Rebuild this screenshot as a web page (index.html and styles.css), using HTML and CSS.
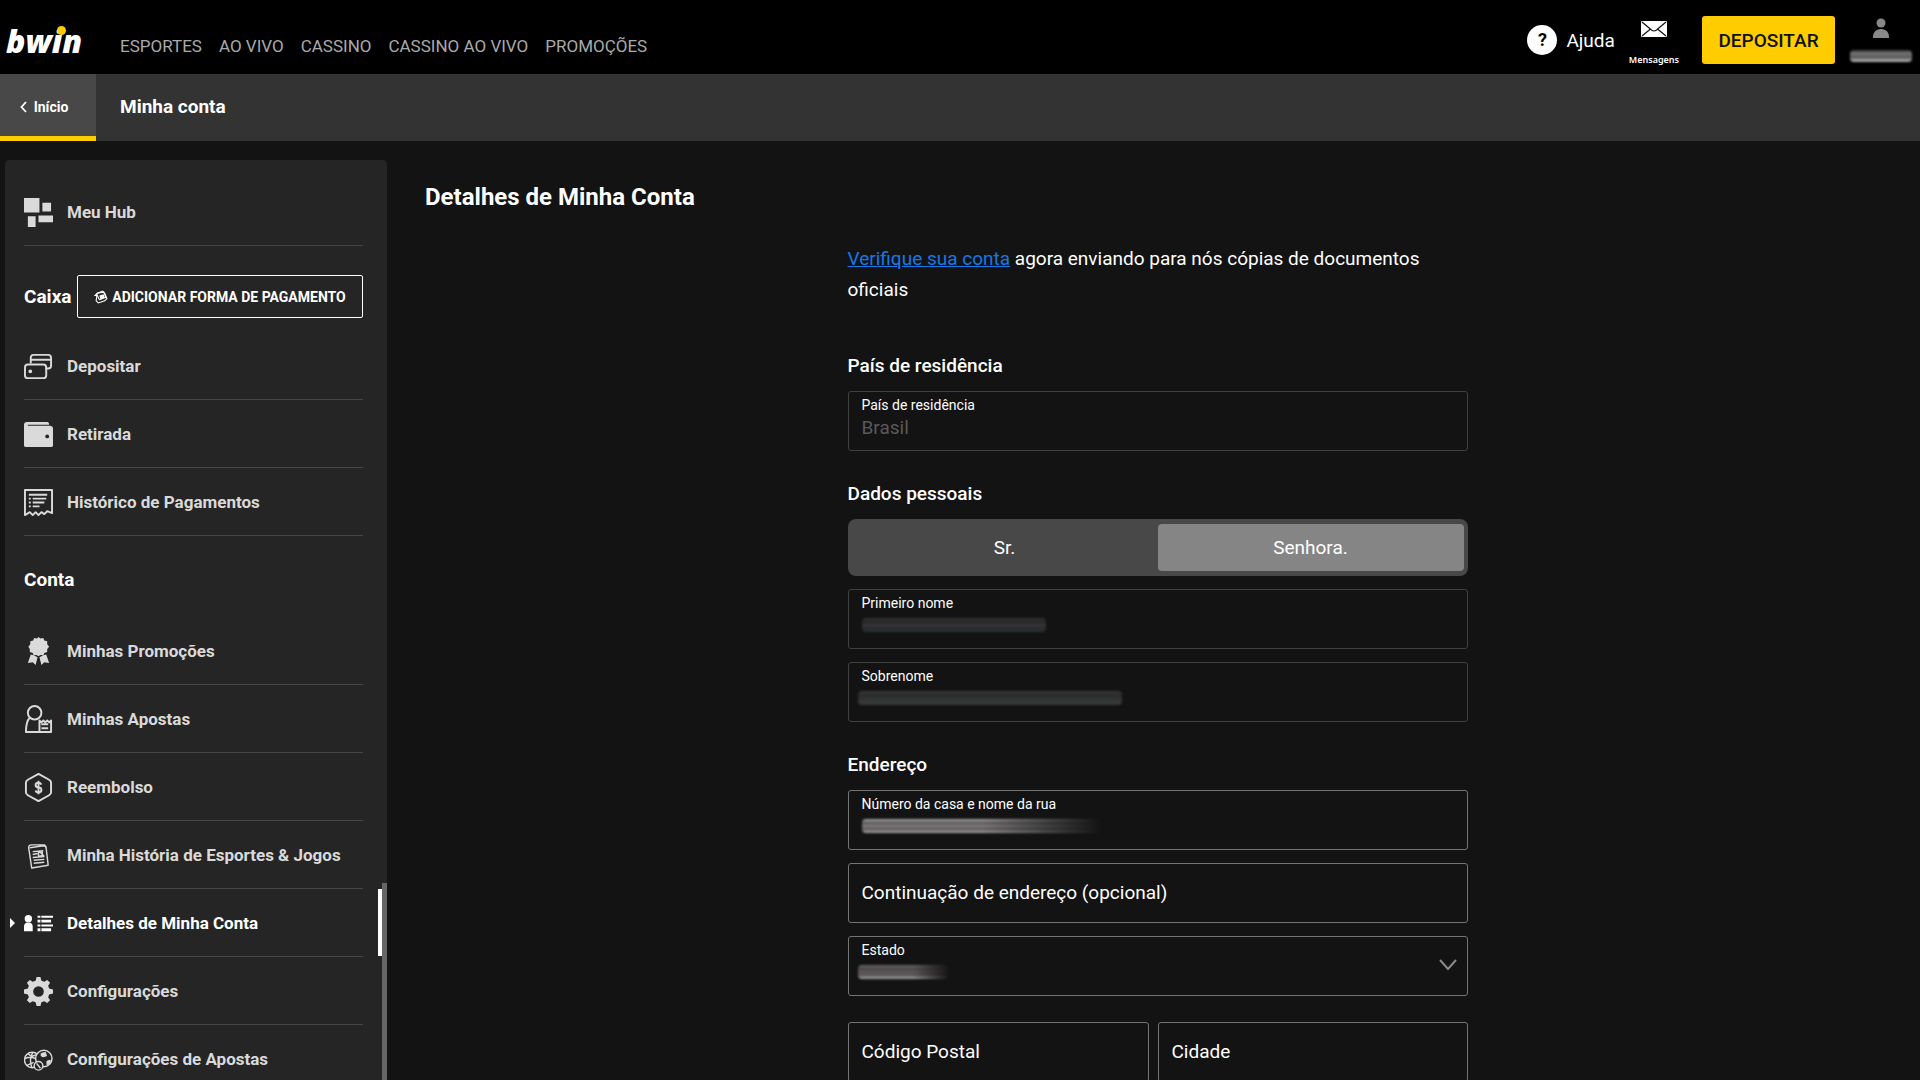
FILE: index.html
```html
<!DOCTYPE html>
<html lang="pt-BR">
<head>
<meta charset="utf-8">
<title>bwin - Minha conta</title>
<link rel="stylesheet" href="styles.css">
</head>
<body>
<header class="topbar">
  <a class="logo" href="#">bwin<span class="logo-dot"></span></a>
  <nav class="mainnav">
    <a href="#">ESPORTES</a>
    <a href="#">AO VIVO</a>
    <a href="#">CASSINO</a>
    <a href="#">CASSINO AO VIVO</a>
    <a href="#">PROMOÇÕES</a>
  </nav>
  <div class="tools">
    <a class="help" href="#"><span class="help-mark">?</span>Ajuda</a>
    <a class="messages" href="#">
      <svg width="26" height="16" viewBox="0 0 26 16"><rect width="26" height="16" rx="1" fill="#fff"/><path d="M1 1l9.500 8q2.500 2 5 0L25 1M1 15l8.500-7M25 15l-8.500-7" fill="none" stroke="#111" stroke-width="1.200"/></svg>
      <span>Mensagens</span>
    </a>
    <button class="deposit" type="button">DEPOSITAR</button>
    <a class="profile" href="#" aria-label="Perfil">
      <svg width="18" height="20" viewBox="0 0 18 20" fill="#888"><circle cx="9" cy="5" r="4.500"/><path d="M1 20v-1q0-7 7-8h2q7 1 7 8v1z"/></svg>
      <span class="masked masked-balance"></span>
    </a>
  </div>
</header>

<div class="subbar">
  <a class="back" href="#"><svg width="7" height="12" viewBox="0 0 7 12"><path d="M6 1L1.500 6 6 11" fill="none" stroke="#fff" stroke-width="1.800"/></svg>Início</a>
  <h1 class="section-title">Minha conta</h1>
</div>

<div class="layout">
  <aside class="sidebar">
    <ul class="menu">
      <li><a href="#"><svg class="icon" viewBox="0 0 30 30"><path d="M0 0h16v15H0zM19 5h9v9h-9zM15 18h15v7H15zM4 19h8v11H4z"/></svg>Meu Hub</a></li>
    </ul>
    <div class="menu-head cashier">
      <h2>Caixa</h2>
      <button class="add-payment" type="button">
        <svg width="14" height="14" viewBox="0 0 13 13"><g fill="none" stroke="#fff"><path d="M3 3l5-2 2 2 2 5-2 2-6 2-2-2z"/><path d="M1 5l2-2 6-1 2 5-6 2-2-4z"/></g><path d="M5 5l4-1 1 3-4 2z" fill="#fff"/></svg>
        ADICIONAR FORMA DE PAGAMENTO
      </button>
    </div>
    <ul class="menu">
      <li><a href="#"><svg class="icon line" viewBox="0 0 30 30"><path d="M7 12V6q0-3 3-3h15q3 0 3 3v8q0 3-3 3h-3M7 8h21"/><rect x="1" y="13" width="22" height="14" rx="3"/><circle class="solid" cx="6.500" cy="20" r="1"/></svg>Depositar</a></li>
      <li><a href="#"><svg class="icon" viewBox="0 0 30 30"><path d="M3 2h21q2 0 2 3H4v1h23q2 0 3 2v18q0 2-2 2H2q-2 0-2-2V5q0-3 3-3z"/><circle cx="24" cy="17" r="2" fill="#252525"/></svg>Retirada</a></li>
      <li><a href="#"><svg class="icon line" viewBox="0 0 30 30"><path d="M1 28V2h28v24l-5-2-3 3-3-2-3 3-3-3-3 3-3-3zM5 7h19M5 11h2M9 11h14M5 15h2M9 15h12M5 19h2M9 19h7"/></svg>Histórico de Pagamentos</a></li>
    </ul>
    <div class="menu-head"><h2>Conta</h2></div>
    <ul class="menu">
      <li><a href="#"><svg class="icon" viewBox="0 0 30 30"><path d="M15 0l2 1.500 3-.5 1 2.500 3 1v3l2 2.500-2 2.500v3l-3 1-1 2.500-3-.500-2 1.500-2-1.500-3 .500-1-2.500-3-1v-3L4.500 10l2-2.500v-3l3-1 1-2.500 3 .5zM7 18l3 1 4 2-2 8-3-3-5 1zM23 18l-3 1-4 2 2 8 3-3 5 1z"/></svg>Minhas Promoções</a></li>
      <li><a href="#"><svg class="icon line" viewBox="0 0 30 30"><circle cx="11" cy="8" r="7"/><path d="M6 13q-4 4-4 15h26V16l-2 2-2-2-2 2-2-2-2 2-2-2v12M18 20h7M18 24h7"/></svg>Minhas Apostas</a></li>
      <li><a href="#"><svg class="icon line" viewBox="0 0 30 30"><path d="M15 1l11 6q2 1 2 3v10q0 2-2 3l-11 6-11-6q-2-1-2-3V10q0-2 2-3z"/><path d="M18 12q-1-2-3-2-3 0-3 2.500t3 2.500 3 2.500-3 2.500q-2.500 0-3-2M15 8v14"/></svg>Reembolso</a></li>
      <li><a href="#"><svg class="icon line thin" viewBox="0 0 30 30"><path d="M6 7l14-2q3 0 3 3l2 17-17 3-3-20q-1-4 3-4h13l2 2M9 11l11-1M9 14l5-1M17 12l4 4M9 17l12-1M10 20l11-1M10 23l11-1M15 12l4-1v4l-4 1z"/></svg>Minha História de Esportes &amp; Jogos</a></li>
      <li class="current"><a href="#" aria-current="page"><svg class="icon" viewBox="0 0 30 30"><circle cx="4.500" cy="10" r="3.800"/><path d="M0 23v-5q0-4 4.500-4T9 18v5zM14 7h3v2h-3zM18 7h12v2H18zM14 11h3v3h-3zM18 11h10v3H18zM14 16h3v2h-3zM18 16h12v2H18zM14 20h3v3h-3zM18 20h10v3H18z"/></svg>Detalhes de Minha Conta</a></li>
      <li><a href="#"><svg class="icon" viewBox="0 0 30 30"><path fill-rule="evenodd" d="M13 0h4l1 4 3 1 3-2 3 3-2 3 1 3 4 1v4l-4 1-1 3 2 3-3 3-3-2-3 1-1 4h-4l-1-4-3-1-3 2-3-3 2-3-1-3-4-1v-4l4-1 1-3-2-3 3-3 3 2 3-1zM15 9.500a5.500 5.500 0 100 11 5.500 5.500 0 100-11z"/></svg>Configurações</a></li>
      <li><a href="#"><svg class="icon line thin" viewBox="0 0 30 30"><circle cx="8.500" cy="15.500" r="8"/><path d="M9 8q-4 7-1 15M1 14q7-3 12 1M4 9q4 4 9 1M3 21l7-3"/><circle cx="20.500" cy="14" r="8.500" fill="#252525"/><path class="solid" d="M18 9l4-1 1 3-3 1-2-1zM24 17l3-1-1 3-2 1z"/><circle cx="15" cy="21.500" r="4.500" fill="#252525"/><path d="M13 19l4 5"/></svg>Configurações de Apostas</a></li>
    </ul>
    <span class="scroll-thumb"></span>
  </aside>

  <main class="content">
    <h2 class="page-title">Detalhes de Minha Conta</h2>
    <form class="form">
      <p class="notice"><a href="#">Verifique sua conta</a> agora enviando para nós cópias de documentos oficiais</p>

      <section class="group">
        <h3>País de residência</h3>
        <div class="field disabled"><label for="country">País de residência</label><input id="country" type="text" value="Brasil" disabled></div>
      </section>

      <section class="group">
        <h3>Dados pessoais</h3>
        <div class="toggle">
          <button type="button">Sr.</button>
          <button type="button" class="selected" aria-pressed="true">Senhora.</button>
        </div>
        <div class="field disabled"><label for="first">Primeiro nome</label><input id="first" type="text" disabled><span class="masked masked-first"></span></div>
        <div class="field disabled"><label for="last">Sobrenome</label><input id="last" type="text" disabled><span class="masked masked-last"></span></div>
      </section>

      <section class="group">
        <h3>Endereço</h3>
        <div class="field"><label for="street">Número da casa e nome da rua</label><input id="street" type="text"><span class="masked masked-street"></span></div>
        <div class="field empty"><label for="street2">Continuação de endereço (opcional)</label><input id="street2" type="text"></div>
        <div class="field"><label for="state">Estado</label><select id="state"><option></option></select><span class="masked masked-state"></span>
          <svg class="chevron" width="18" height="12" viewBox="0 0 18 12"><path d="M1 1l8 9 8-9" fill="none" stroke="#8a8a8a" stroke-width="2"/></svg></div>
        <div class="pair">
          <div class="field empty"><label for="zip">Código Postal</label><input id="zip" type="text"></div>
          <div class="field empty"><label for="city">Cidade</label><input id="city" type="text"></div>
        </div>
      </section>
    </form>
  </main>
</div>
</body>
</html>
```
FILE: styles.css
```css
* { box-sizing: border-box; }

body {
  margin: 0;
  height: 100vh;
  display: flex;
  flex-direction: column;
  overflow: hidden;
  background: #131313;
  color: #fff;
  font-family: Roboto, "Liberation Sans", sans-serif;
  font-size: 19px;
}

h1, h2, h3, p, ul { margin: 0; padding: 0; }
ul { list-style: none; }
a { color: inherit; text-decoration: none; }
button, input, select { font: inherit; color: inherit; }
svg { flex: none; display: block; }

/* Top bar */
.topbar {
  flex: none;
  height: 74px;
  display: flex;
  align-items: center;
  padding: 8px 8px 0 6px;
  background: #000;
}

.logo {
  position: relative;
  width: 114px;
  font: italic 800 32px/40px "Open Sans", sans-serif;
}

.logo-dot {
  position: absolute;
  left: 51px;
  top: 5px;
  width: 9px;
  height: 9px;
  border-radius: 50%;
  background: #fc0;
}

.mainnav {
  display: flex;
  gap: 17px;
  padding-top: 9px;
  color: #aaa;
  font-size: 17px;
  line-height: 20px;
}

.tools {
  display: flex;
  align-items: center;
  margin: -10px 0 0 auto;
  height: 66px;
  padding-top: 8px;
}

.help { display: flex; align-items: center; gap: 9px; }

.help-mark {
  width: 30px;
  height: 30px;
  border-radius: 50%;
  background: #fff;
  color: #000;
  font-size: 18px;
  font-weight: 700;
  line-height: 30px;
  text-align: center;
}

.messages {
  display: flex;
  flex-direction: column;
  align-items: center;
  gap: 17px;
  padding-top: 7px;
  margin: 0 23px 0 14px;
  font: 600 9px/12px "Noto Sans", sans-serif;
}

.deposit {
  width: 133px;
  height: 48px;
  padding: 0;
  border: 0;
  border-radius: 3px;
  background: #fc0;
  color: #111;
  font-weight: 500;
}

.profile {
  display: flex;
  flex-direction: column;
  align-items: center;
  gap: 12px;
  margin-left: 15px;
}

/* Smeared strips that hide private values */
.masked { display: block; filter: blur(1px); border-radius: 4px; }
.masked-balance { width: 62px; height: 12px; background: linear-gradient(#333, #777 30%, #555 60%, #aaa 90%); }

/* Section bar */
.subbar {
  flex: none;
  display: flex;
  align-items: stretch;
  gap: 24px;
  height: 67px;
  background: #333;
}

.back {
  display: flex;
  align-items: center;
  justify-content: center;
  gap: 7px;
  width: 96px;
  padding: 4px 8px 0 0;
  border-bottom: 5px solid #fc0;
  background: #484848;
  font-size: 14px;
  font-weight: 700;
}

.section-title { font-size: 19px; line-height: 66px; font-weight: 700; }

/* Page columns */
.layout { flex: 1; display: flex; min-height: 0; padding: 19px 0 0 5px; }

/* Side menu */
.sidebar {
  position: relative;
  flex: none;
  width: 382px;
  padding: 18px 24px 0 19px;
  overflow: hidden;
  border-radius: 4px 4px 0 0;
  background: #252525;
  color: #dadada;
}

.menu li { position: relative; border-bottom: 1px solid #454545; }

.menu a {
  display: flex;
  align-items: center;
  gap: 14px;
  height: 67px;
  padding-top: 1px;
  font-size: 17px;
  font-weight: 700;
}

.icon { width: 29px; height: 29px; fill: currentColor; }
.icon.line { fill: none; stroke: currentColor; stroke-width: 2; stroke-linejoin: round; }
.icon.thin { stroke-width: 1.5; }
.icon .solid { fill: currentColor; }

.menu-head {
  display: flex;
  align-items: center;
  justify-content: space-between;
  height: 81px;
  padding-top: 6px;
  color: #fff;
}

.menu-head h2 { font-size: 19px; font-weight: 700; }
.cashier { height: 86px; padding: 15px 0 0; }

.add-payment {
  display: flex;
  align-items: center;
  justify-content: center;
  gap: 4px;
  width: 286px;
  height: 43px;
  padding: 0;
  border: 1px solid #fff;
  border-radius: 2px;
  background: none;
  font-size: 14px;
  font-weight: 700;
}

.current { color: #fff; }

.current::before {
  content: "";
  position: absolute;
  left: -14px;
  top: 29px;
  border: 5px solid transparent;
  border-left-color: #fff;
  border-right: 0;
}

.current::after {
  content: "";
  position: absolute;
  right: -19px;
  top: 0;
  width: 4px;
  height: 67px;
  background: #fff;
}

.scroll-thumb {
  position: absolute;
  right: 0;
  top: 723px;
  bottom: 0;
  width: 5px;
  background: #666;
}

/* Account details */
.content { flex: 1; padding: 22px 30px 0 38px; }
.page-title { font-size: 24px; line-height: 30px; font-weight: 700; }
.form { max-width: 620px; margin: 31px auto 0; }
.notice { line-height: 31px; }
.notice a { color: #1778e8; text-decoration: underline; }

.group { display: flex; flex-direction: column; gap: 13px; padding-top: 31px; }
.notice + .group { padding-top: 49px; }
.group h3 { font-size: 19px; line-height: 24px; font-weight: 500; }

.field {
  position: relative;
  height: 60px;
  border: 1px solid #747474;
  border-radius: 3px;
}

.field.disabled { border-color: #404040; }

.field label {
  position: absolute;
  left: 13px;
  top: 5px;
  font-size: 14px;
  line-height: 16px;
}

.field.empty label { font-size: 19px; line-height: 24px; top: 17px; }

.field input,
.field select {
  width: 100%;
  height: 100%;
  padding: 12px 13px 0;
  border: 0;
  outline: 0;
  background: none;
  appearance: none;
}

.field input:disabled { color: #5a5a5a; }
.field .masked { position: absolute; top: 28px; left: 13px; height: 14px; }
.field .masked-first { width: 184px; background: linear-gradient(#333, #262626 30%, #3b353f 50%, #262a2a 70%, #303434); }
.field .masked-last { left: 9px; width: 264px; background: linear-gradient(#3a3a3a, #2b2b2b 30%, #303234 60%, #3a3d3d); }
.field .masked-street { width: 240px; background: linear-gradient(90deg, transparent 50%, #131313), linear-gradient(#aaa, #555 30%, #8a8084 50%, #555 70%, #aaa); }
.field .masked-state { left: 9px; width: 92px; background: linear-gradient(90deg, transparent 60%, #131313), linear-gradient(#666, #484848 30%, #66555f 50%, #505050 70%, #aaa); }

.chevron { position: absolute; right: 10px; top: 22px; }

.toggle {
  display: grid;
  grid-template-columns: 1fr 1fr;
  height: 57px;
  padding: 5px 4px;
  border-radius: 8px;
  background: #484848;
}

.toggle button { padding: 0; border: 0; border-radius: 4px; background: none; }
.toggle .selected { background: #858585; }

.pair { display: grid; grid-template-columns: 301px 1fr; gap: 9px; padding-top: 13px; }
```
